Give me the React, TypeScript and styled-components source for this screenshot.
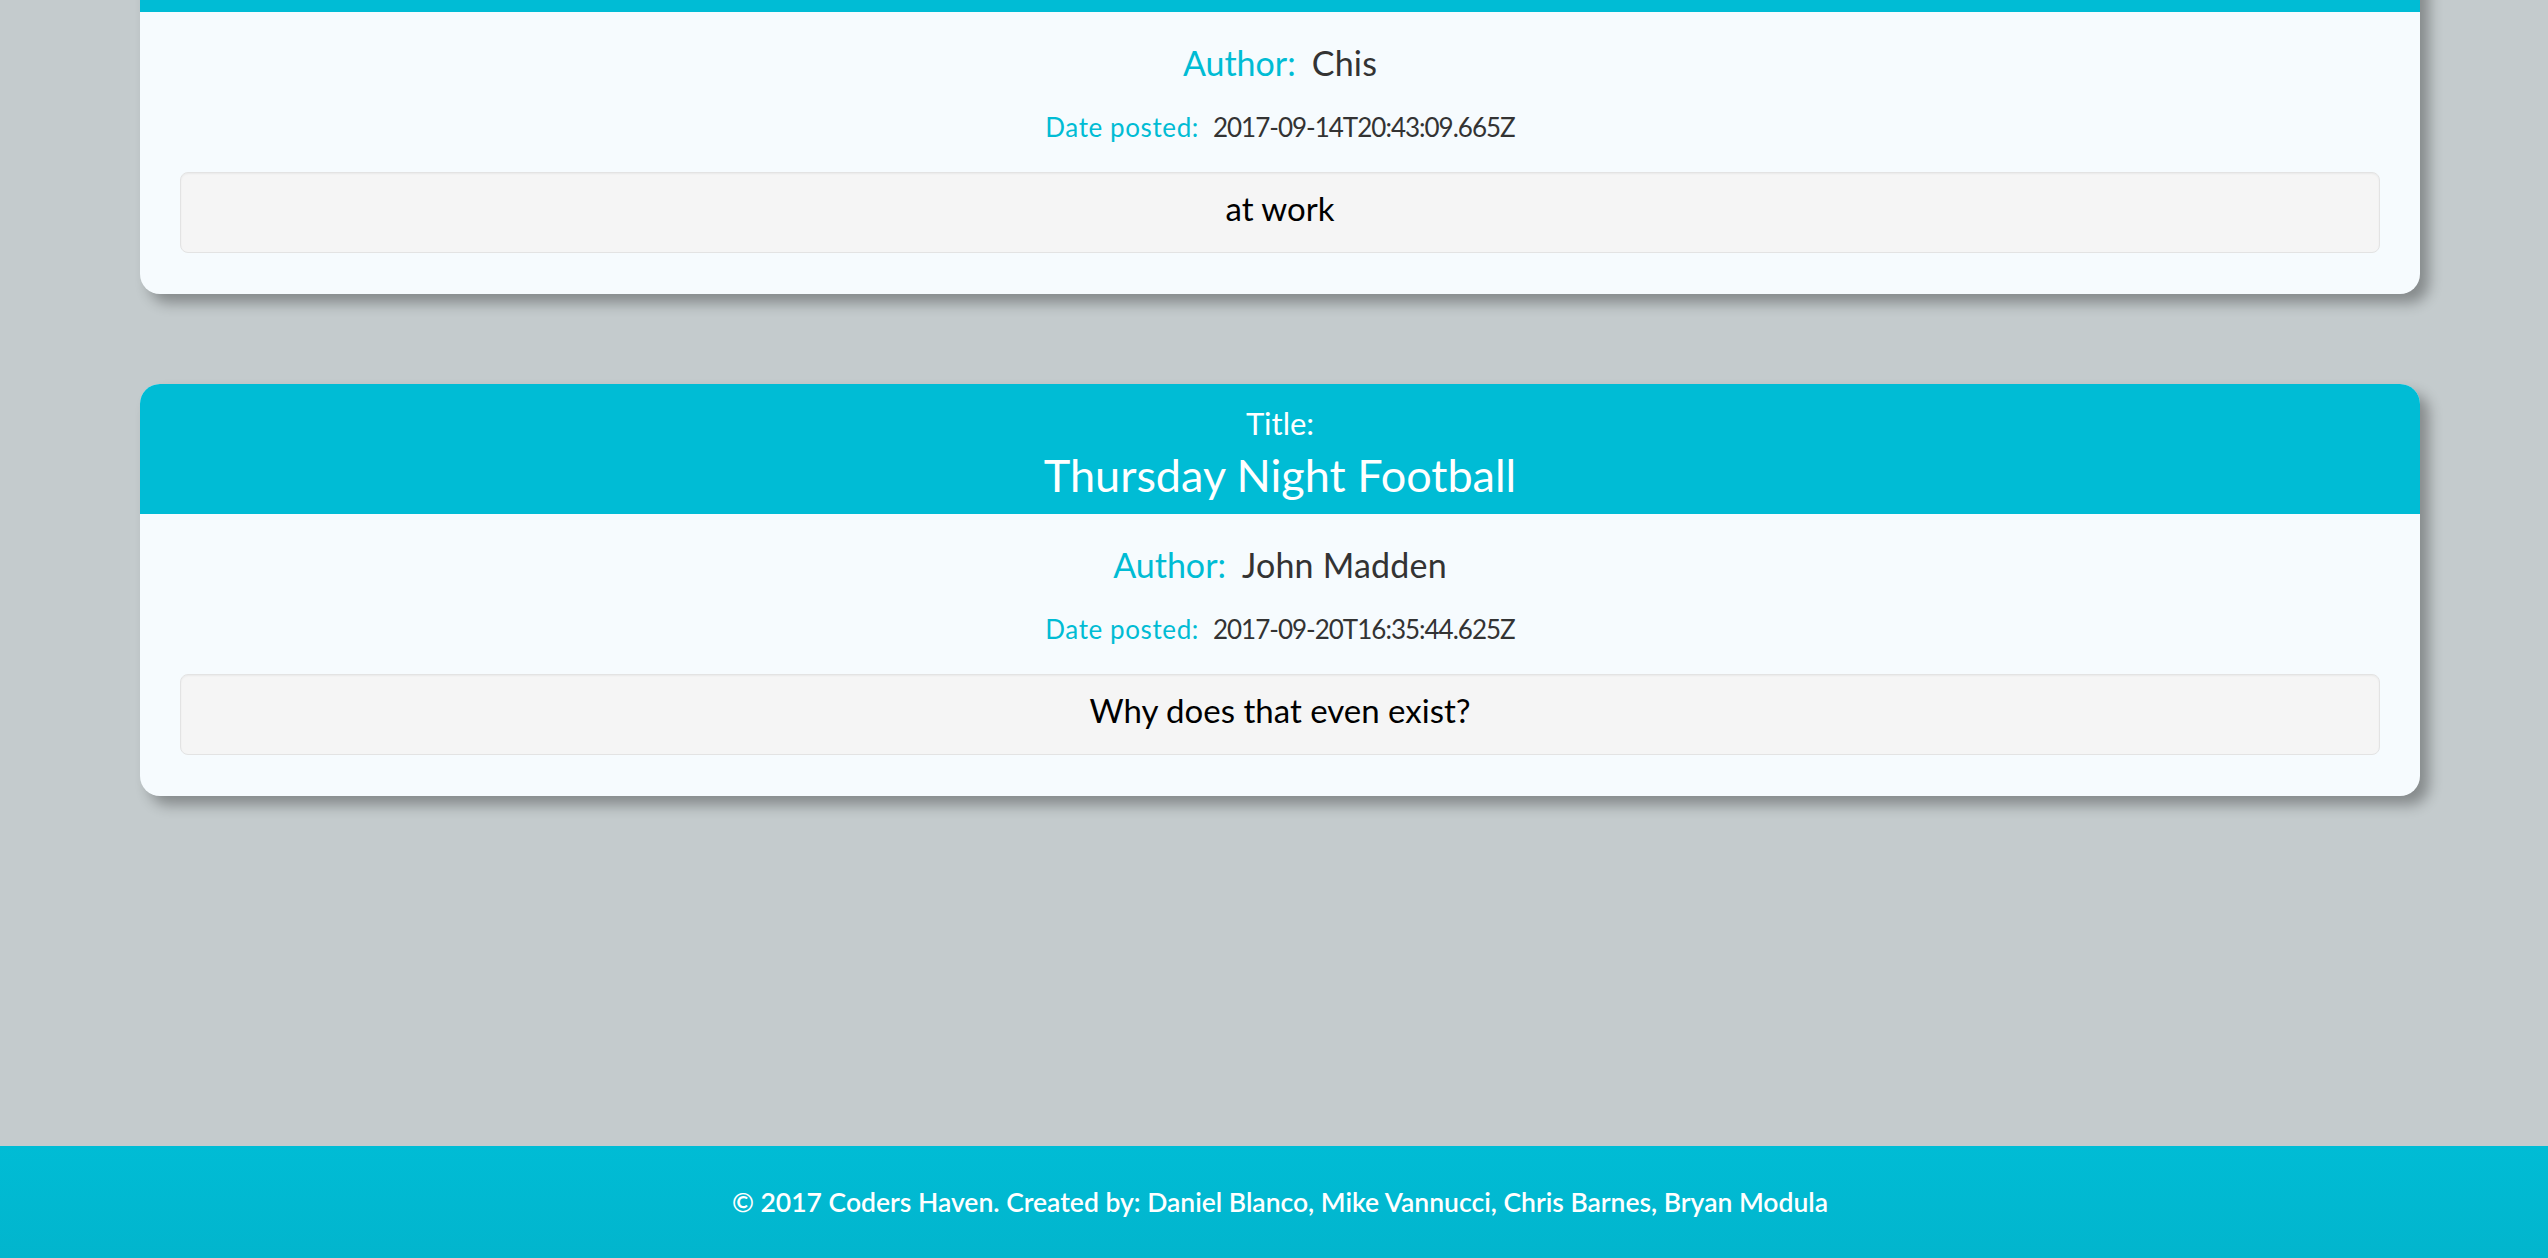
import React from "react";
import styled, { createGlobalStyle } from "styled-components";

const GlobalStyle = createGlobalStyle`
  html, body {
    margin: 0;
    padding: 0;
    background: #c4cbcd;
    font-family: Lato, "Open Sans", "Liberation Sans", sans-serif;
  }
  * { box-sizing: border-box; }
`;

const Page = styled.div`
  min-height: 100vh;
  display: flex;
  flex-direction: column;
  overflow: hidden;
`;

const Main = styled.main`
  flex: 1;
`;

const Feed = styled.section`
  display: flex;
  flex-direction: column;
  gap: 90px;
  margin-top: -118px;
  padding: 0 128px 0 140px;
`;

const Card = styled.article`
  border-radius: 20px;
  overflow: hidden;
  background: #f6fbfe;
  box-shadow: 9px 9px 14px rgba(0, 0, 0, 0.32);
`;

const CardHeader = styled.header`
  height: 130px;
  padding-top: 21px;
  background: #00bcd5;
  color: #ffffff;
  display: flex;
  flex-direction: column;
  align-items: center;
`;

const TitleLabel = styled.div`
  font-size: 31px;
  line-height: 36px;
`;

const TitleText = styled.h3`
  margin: 8px 0 0;
  font-size: 45px;
  line-height: 52px;
  font-weight: 400;
`;

const CardBody = styled.div`
  padding: 29px 40px 41px;
  display: flex;
  flex-direction: column;
  align-items: stretch;
`;

const MetaRow = styled.div<{ $size: "lg" | "sm" }>`
  display: flex;
  justify-content: center;
  gap: ${(p) => (p.$size === "lg" ? "16px" : "14px")};
  font-size: ${(p) => (p.$size === "lg" ? "34px" : "26px")};
  line-height: ${(p) => (p.$size === "lg" ? "44px" : "34px")};
  margin-top: ${(p) => (p.$size === "lg" ? "0" : "25px")};
`;

const MetaLabel = styled.span<{ $tight?: boolean }>`
  color: #00bcd4;
  letter-spacing: ${(p) => (p.$tight ? "0.6px" : "0")};
`;

const MetaValue = styled.span<{ $tight?: boolean }>`
  color: #333333;
  letter-spacing: ${(p) => (p.$tight ? "-1px" : "0.2px")};
`;

const Well = styled.div`
  margin-top: 28px;
  height: 81px;
  padding: 15px 19px 0;
  background: #f5f5f5;
  border: 1px solid #e3e3e3;
  border-radius: 8px;
  box-shadow: inset 0 1px 2px rgba(0, 0, 0, 0.05);
  text-align: center;
  font-size: 33px;
  line-height: 40px;
  color: #000000;
`;

const Footer = styled.footer`
  height: 112px;
  padding-left: 12px;
  display: flex;
  align-items: center;
  justify-content: center;
  background: linear-gradient(180deg, #00bcd5 0%, #02b5cd 100%);
  color: #ffffff;
  font-size: 26.5px;
  font-weight: 600;
`;

type Post = {
  title?: string;
  author: string;
  date: string;
  body: string;
};

const posts: Post[] = [
  { author: "Chis", date: "2017-09-14T20:43:09.665Z", body: "at work" },
  {
    title: "Thursday Night Football",
    author: "John Madden",
    date: "2017-09-20T16:35:44.625Z",
    body: "Why does that even exist?",
  },
];

function PostCard({ post }: { post: Post }) {
  return (
    <Card>
      <CardHeader>
        {post.title && (
          <>
            <TitleLabel>Title:</TitleLabel>
            <TitleText>{post.title}</TitleText>
          </>
        )}
      </CardHeader>
      <CardBody>
        <MetaRow $size="lg">
          <MetaLabel>Author:</MetaLabel>
          <MetaValue>{post.author}</MetaValue>
        </MetaRow>
        <MetaRow $size="sm">
          <MetaLabel $tight>Date posted:</MetaLabel>
          <MetaValue $tight>{post.date}</MetaValue>
        </MetaRow>
        <Well>{post.body}</Well>
      </CardBody>
    </Card>
  );
}

export default function App() {
  return (
    <>
      <GlobalStyle />
      <Page>
        <Main>
          <Feed>
            {posts.map((p, i) => (
              <PostCard key={i} post={p} />
            ))}
          </Feed>
        </Main>
        <Footer>© 2017 Coders Haven. Created by: Daniel Blanco, Mike Vannucci, Chris Barnes, Bryan Modula</Footer>
      </Page>
    </>
  );
}
